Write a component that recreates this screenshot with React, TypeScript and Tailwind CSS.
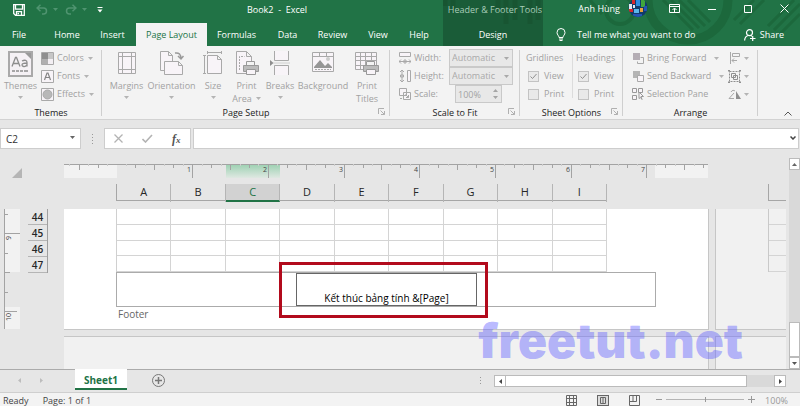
import React from "react";

const INK = "#a9a9a9";

function Caret({ className = "text-[#b4b4b4]" }: { className?: string }) {
  return (
    <svg width="5" height="3" viewBox="0 0 5 3" className={`shrink-0 ${className}`} aria-hidden="true">
      <path d="M0 0h5L2.500 3z" fill="currentColor" />
    </svg>
  );
}

function Launcher({ name }: { name: string }) {
  return (
    <button type="button" aria-label={name} className="absolute right-1 bottom-1 h-2 w-2">
      <svg width="7" height="7" viewBox="0 0 7 7" fill="none" stroke="#b0b0b0">
        <path d="M.5 6V.5H6M2.500 2.500l4 4M6.500 3v3.500H3" />
      </svg>
    </button>
  );
}

/* ---------- Header ---------- */

function TitleLeft() {
  return (
    <div className="flex h-[23px] items-center pb-1 pl-[13px]">
      <button type="button" aria-label="Save">
        <svg width="12" height="12" viewBox="0 0 12 12" fill="none" stroke="#fff" strokeWidth="1.300">
          <path d="M.7.7h10.600v10.600H2.500L.7 9.500zM2.500.7v4.500h7V.7M3.500 11V7.700h5V11" />
          <path d="M4.500 9.500h1.500" />
        </svg>
      </button>
      <button type="button" aria-label="Undo" className="ml-[11px] flex items-center gap-[5px]">
        <svg width="12" height="11" viewBox="0 0 12 11" fill="none" stroke="#4f9470" strokeWidth="1.500">
          <path d="M4.500.7L1 4l3.500 3.300M1.300 4H7.500a3 3 0 0 1 0 6H6" />
        </svg>
        <Caret className="text-[#4f9470]" />
      </button>
      <button type="button" aria-label="Redo" className="ml-[7px] flex items-center gap-[5px]">
        <svg width="12" height="11" viewBox="0 0 12 11" fill="none" stroke="#4f9470" strokeWidth="1.500">
          <path d="M7.500.7L11 4 7.500 7.300M10.700 4H4.500a3 3 0 0 0 0 6H6" />
        </svg>
        <Caret className="text-[#4f9470]" />
      </button>
      <button type="button" aria-label="Customize Quick Access Toolbar" className="ml-[10px]">
        <svg width="6" height="6" viewBox="0 0 6 6" fill="#fff">
          <path d="M.5 0h5v1h-5zM.5 2.500h5L3 5.500z" />
        </svg>
      </button>
      <h1 className="flex-1 pl-[8px] text-center text-[9px] font-medium whitespace-nowrap">Book2&nbsp; -&nbsp; Excel</h1>
    </div>
  );
}

const tabs: [string, string][] = [
  ["File", "w-[45px] pr-[7px]"],
  ["Home", "w-[44px]"],
  ["Insert", "w-[47px]"],
  ["Page Layout", "w-[71px]"],
  ["Formulas", "w-[59px]"],
  ["Data", "w-[43px]"],
  ["Review", "w-[47px]"],
  ["View", "w-[44px]"],
  ["Help", "w-[38px]"],
];

function HeaderArt() {
  return (
    <svg
      className="pointer-events-none absolute top-0 right-0"
      width="357"
      height="46"
      viewBox="443 0 357 46"
      fill="none"
      stroke="#1c683c"
      aria-hidden="true"
    >
      <circle cx="688" cy="0" r="40" strokeWidth="9" />
      <circle cx="620" cy="10" r="14" strokeWidth="4" />
      <path strokeWidth="3" d="M663 0l30 30M671 0l28 28M679 0l26 26M688 0l22 22M590 0l12 14M734 20l20-20M740 24l24-24M768 26l26-26M774 30l26-26M780 34l20-20" />
      <path stroke="#185532" strokeWidth="5" d="M445 0v6M453 0v12M498 0v10M506 0v24M515 0v20M530 0v24M538 0v20" />
    </svg>
  );
}

function Header() {
  return (
    <header className="relative flex h-[46px] shrink-0 bg-[#217346] text-[9px] font-medium text-white">
      <div className="flex w-[443px] shrink-0 flex-col">
        <TitleLeft />
        <nav className="flex h-[23px]">
          {tabs.map(([t, w]) => (
            <button
              key={t}
              type="button"
              className={`${w} ${t === "Page Layout" ? "bg-[#f3f3f3] text-[#217346]" : ""} whitespace-nowrap`}
            >
              {t}
            </button>
          ))}
        </nav>
      </div>
      <div className="w-[100px] shrink-0 bg-[#1a5c38]" />
      <div className="flex-1" />
      <HeaderArt />
      <div className="absolute inset-y-0 right-0 left-[443px] flex">
        <div className="flex w-[100px] flex-col text-center">
          <span className="h-[23px] pt-[1px] pl-1 leading-[17px] font-normal whitespace-nowrap text-[#a9cdb8]">Header &amp; Footer Tools</span>
          <button type="button" className="h-[23px]">Design</button>
        </div>
        <div className="flex min-w-0 flex-1 flex-col">
          <div className="flex h-[23px] items-start">
            <span className="ml-auto pr-2 leading-[17px]">Anh Hùng</span>
            <svg width="20" height="18" viewBox="0 0 20 18" aria-label="Account picture">
              <clipPath id="face"><circle cx="10" cy="7.500" r="9.500" /></clipPath>
              <g clipPath="url(#face)">
                <path fill="#123a6b" d="M0-3h20v21H0z" />
                <path fill="#d8262c" d="M4 0h3v4H4z" />
                <path fill="#2f8be0" d="M8 0h4v6H8z" />
                <path fill="#3fa63c" d="M13 0h4v7h-4z" />
                <path fill="#e2e8f5" d="M1 4h3v5H1zM5 5h2v3H5z" />
                <path fill="#d8262c" d="M1 9h4v3H1z" />
                <path fill="#58b7ea" d="M6 9h5v4H6z" />
                <path fill="#e8a33a" d="M12 8h3v4h-3z" />
                <path fill="#2454b4" d="M16 6h3v5h-3zM5 14h9v3H5z" />
              </g>
            </svg>
            <div className="flex h-[17px] items-center pl-[21px]">
              <button type="button" aria-label="Ribbon Display Options" className="w-[11px]">
                <svg width="11" height="9" viewBox="0 0 11 9" fill="none" stroke="#fff">
                  <path d="M.5.5h10v8H.5zM.5 2.500h10M5.500 8V4.500M3.500 6l2-2 2 2" />
                </svg>
              </button>
              <button type="button" aria-label="Minimize" className="ml-7">
                <svg width="8" height="8" stroke="#fff"><path d="M0 4.500h8" /></svg>
              </button>
              <button type="button" aria-label="Maximize" className="ml-7">
                <svg width="8" height="8" fill="none" stroke="#fff"><path d="M.5.5h7v7h-7z" /></svg>
              </button>
              <button type="button" aria-label="Close" className="mr-[11px] ml-7">
                <svg width="9" height="9" stroke="#fff"><path d="M.5.5l8 8M8.500.5l-8 8" /></svg>
              </button>
            </div>
          </div>
          <div className="flex h-[23px] items-center pr-4 pl-[13px]">
            <button type="button" className="flex items-center gap-[11px] whitespace-nowrap">
              <svg width="10" height="13" viewBox="0 0 10 13" fill="none" stroke="#fff">
                <path d="M3 9.500C3 7.500 1 7 1 4.500a4 4 0 0 1 8 0C9 7 7 7.500 7 9.500zM3 11h4M3.500 12.500h3" />
              </svg>
              Tell me what you want to do
            </button>
            <button type="button" className="ml-auto flex items-center gap-1">
              <svg width="12" height="12" viewBox="0 0 12 12" fill="none" stroke="#fff" strokeWidth="1.200">
                <circle cx="5.500" cy="3.700" r="3" />
                <path d="M.6 11.500c.2-3 1.500-4.500 3.600-5M6.800 6.500l1.200.8M6 9.500h5.500M8.700 7v5" />
              </svg>
              Share
            </button>
          </div>
        </div>
      </div>
    </header>
  );
}

/* ---------- Ribbon ---------- */

function Group({ title, className, launcher, children }: { title: string; className: string; launcher?: boolean; children: React.ReactNode }) {
  return (
    <section className={`relative flex shrink-0 flex-col ${className}`}>
      <div className="flex h-[61px]">{children}</div>
      <h2 className="text-center leading-[13px] font-medium text-[#222]">{title}</h2>
      {launcher && <Launcher name={`${title} settings`} />}
      <span className="absolute top-1 right-0 h-[66px] w-px bg-[#cfcfcf]" />
    </section>
  );
}

function Big({ label, icon, caret, className }: { label: string; icon: React.ReactNode; caret?: "below" | "inline"; className: string }) {
  const [first, second] = label.split("|");
  return (
    <button type="button" className={`flex shrink-0 flex-col items-center pt-[5px] leading-[13px] whitespace-nowrap ${className}`}>
      <span className="flex h-7 items-start">{icon}</span>
      <span>{first}</span>
      {second && (
        <span className="flex items-center gap-1">
          {second}
          {caret === "inline" && <Caret />}
        </span>
      )}
      {caret === "below" && <Caret className="mt-1 text-[#b4b4b4]" />}
    </button>
  );
}

const paper = { fill: "#f8f4f8", stroke: INK };

const ThemesIcon = (
  <svg width="25" height="26" viewBox="0 0 25 26">
    <path d="M1 1h23v24H1z" fill="#f5f1f5" stroke={INK} strokeWidth="2" />
    <path d="M17 2h6v6z" fill="#9a9a9a" />
    <path d="M4 15.500L7.500 6.500h1L12 15.500M5.500 12.500h5" fill="none" stroke="#8d8d8d" strokeWidth="1.300" />
    <path d="M14 10c3-1.500 5-.5 5 1.500v4M19 12c-3 0-5 .5-5 2s3 2.500 5 0" fill="none" stroke="#8d8d8d" strokeWidth="1.300" />
    <path d="M4 20h3M8 20h3M12 20h3M16 20h4" stroke="#8d8d8d" strokeWidth="1.500" />
  </svg>
);
const MarginsIcon = (
  <svg width="20" height="24" viewBox="0 0 20 24" {...paper}>
    <path d="M1.500 1.500h17v21h-17zM5.500 1v22M14.500 1v22M1 5.500h18M1 18.500h18" />
  </svg>
);
const OrientationIcon = (
  <svg width="25" height="25" viewBox="0 0 25 25" {...paper}>
    <path d="M1.500.5h8l4 4v15h-12zM9.500.5v4h4" />
    <path d="M5.500 10.500h14l4 4v9h-18zM19.500 10.500v4h4" />
    <path d="M16 2c4-.5 6 1 6 6M19 5l3 3 2.500-3" fill="none" strokeWidth="1.500" stroke="#999" />
  </svg>
);
const SizeIcon = (
  <svg width="20" height="24" viewBox="0 0 20 24" {...paper}>
    <path d="M4.500 4.500h10l4 4v14h-14zM14.500 4.500v4h4" />
    <path d="M4 1.500h15M4.500 0v3M18.500 0v3M1.500 4v19M0 4.500h3M0 22.500h3" />
  </svg>
);
const Printer = (
  <g>
    <path d="M11.500 10.500h8v5h-8z" fill="#f3f3f3" stroke="#999" />
    <path d="M8.500 14.500h15v6h-15z" fill="#bbb" stroke="#999" />
    <path d="M11.500 18.500h9v5h-9z" fill="#f8f4f8" stroke="#999" />
  </g>
);
const PrintAreaIcon = (
  <svg width="24" height="24" viewBox="0 0 24 24" {...paper}>
    <path d="M1.500.5h10l5 5v17h-15zM11.500.5v5h5" />
    <path d="M4.500 19V5.500h5" strokeDasharray="2 1" />
    {Printer}
  </svg>
);
const BreaksIcon = (
  <svg width="20" height="24" viewBox="0 0 20 24" {...paper}>
    <path d="M4.500 0v9.500h14V0M4.500 24v-9.500h14V24" />
    <path d="M0 9l3.500 3L0 15z" fill="#8d8d8d" stroke="none" />
    <path d="M3 12h17" stroke="#d0d0d0" />
  </svg>
);
const BackgroundIcon = (
  <svg width="22" height="22" viewBox="0 0 22 22" {...paper}>
    <path d="M.5 1.500h21v19H.5zM.5 5.500h21M7.500 1v5M14.500 1v5" />
    <circle cx="16" cy="8" r="2" fill="#ccc" stroke="none" />
    <path d="M2 16l6-7 5 6 3-3 4 4v1H2z" fill="#969696" stroke="none" />
    <path d="M3 18.500h16" strokeDasharray="2 1" />
  </svg>
);
const PrintTitlesIcon = (
  <svg width="24" height="24" viewBox="0 0 24 24" {...paper}>
    <path d="M.5 1.500h21v17H.5zM.5 5.500h21M.5 9.500h21M.5 14.500h21M5.500 1v18M10.500 1v18M16.500 1v18" />
    {Printer}
  </svg>
);

function Small({ icon, label, name, caret, gap = "gap-1" }: { icon: React.ReactNode; label?: string; name?: string; caret?: boolean; gap?: string }) {
  return (
    <button type="button" aria-label={label ?? name} className={`flex h-[18px] items-center whitespace-nowrap ${gap}`}>
      <span className="flex items-center gap-[3px]">
        {icon}
        {label}
      </span>
      {caret && <Caret />}
    </button>
  );
}

function Tick({ label, checked }: { label: string; checked?: boolean }) {
  return (
    <label className="flex h-[18px] items-center gap-[5px]">
      <span className="relative h-[11px] w-[11px]">
        <input
          type="checkbox"
          defaultChecked={checked}
          className="peer block h-[11px] w-[11px] appearance-none border border-[#c3c3c3] bg-[#e9e9e9]"
        />
        <svg className="pointer-events-none absolute inset-0 hidden peer-checked:block" width="11" height="11" fill="none" stroke="#8f8f8f">
          <path d="M2.500 5.500l2 2 4-4.500" />
        </svg>
      </span>
      {label}
    </label>
  );
}

function FitSelect({ id }: { id: string }) {
  return (
    <span className="relative ml-auto">
      <select id={id} className="block h-[18px] w-16 appearance-none border border-[#c9c9c9] bg-[#e8e8e8] pl-[2px] text-[9px] text-[#a9a9a9]">
        <option>Automatic</option>
      </select>
      <Caret className="pointer-events-none absolute top-2 right-1 text-[#a9a9a9]" />
    </span>
  );
}

function Ribbon() {
  return (
    <div className="relative flex h-[74px] shrink-0 border-b border-[#d2d2d2] bg-[#f3f3f3] text-[9px] text-[#a2a2a2]">
      <Group title="Themes" className="w-[102px]">
        <Big label="Themes" icon={ThemesIcon} caret="below" className="w-[41px]" />
        <div className="pt-[3px]">
          <Small
            label="Colors"
            caret
            icon={
              <svg width="13" height="13" viewBox="0 0 13 13">
                <path d="M.5.5h12v12H.5z" fill="#f3eff3" stroke={INK} />
                <path d="M1 1h6v6H1z" fill="#8f8f8f" /><path d="M7 1h5v6H7z" fill="#c6c6c6" /><path d="M1 7h6v5H1z" fill="#b0b0b0" />
              </svg>
            }
          />
          <Small
            label="Fonts"
            caret
            icon={
              <svg width="13" height="13" viewBox="0 0 13 13" fill="#f8f4f8" stroke={INK}>
                <path d="M.5.5h12v12H.5z" />
                <path d="M3.500 10l2.500-7h1l2.500 7M4.500 7.500h4" fill="none" stroke="#858585" strokeWidth="1.200" />
              </svg>
            }
          />
          <Small
            label="Effects"
            caret
            icon={
              <svg width="13" height="13" viewBox="0 0 13 13" fill="#f8f4f8" stroke={INK}>
                <path d="M.5.5h12v12H.5z" />
                <circle cx="6.500" cy="6.500" r="4.500" fill="#b8b8b8" />
              </svg>
            }
          />
        </div>
      </Group>

      <Group title="Page Setup" className="w-[288px]" launcher>
        <Big label="Margins" icon={MarginsIcon} caret="below" className="ml-1 w-[41px]" />
        <Big label="Orientation" icon={OrientationIcon} caret="below" className="w-[49px]" />
        <Big label="Size" icon={SizeIcon} caret="below" className="w-[34px]" />
        <Big label="Print|Area" icon={PrintAreaIcon} caret="inline" className="w-[33px]" />
        <Big label="Breaks" icon={BreaksIcon} caret="below" className="w-[34px]" />
        <Big label="Background" icon={BackgroundIcon} className="w-[52px]" />
        <Big label="Print|Titles" icon={PrintTitlesIcon} className="w-[36px]" />
      </Group>

      <Group title="Scale to Fit" className="w-[130px]" launcher>
        <div className="flex w-full flex-col pt-[3px] pr-[7px] pl-[9px]">
          <div className="flex items-center gap-[3px]">
            <svg width="12" height="12" viewBox="0 0 12 12" fill="#f8f4f8" stroke={INK}>
              <path d="M.5.5h11v4H.5z" /><path d="M0 9.500h12M2 7.500l-2 2 2 2M10 7.500l2 2-2 2M5 8h2v3H5z" />
            </svg>
            <label htmlFor="fit-width">Width:</label>
            <FitSelect id="fit-width" />
          </div>
          <div className="flex items-center gap-[3px]">
            <svg width="12" height="12" viewBox="0 0 12 12" fill="#f8f4f8" stroke={INK}>
              <path d="M8.500.5h3v11h-3z" /><path d="M3 0v12M1 2l2-2 2 2M1 10l2 2 2-2M1.500 5h3v2h-3z" />
            </svg>
            <label htmlFor="fit-height">Height:</label>
            <FitSelect id="fit-height" />
          </div>
          <div className="flex h-[18px] items-center gap-[3px]">
            <svg width="12" height="12" viewBox="0 0 12 12" fill="#f8f4f8" stroke={INK}>
              <path d="M.5.5h7v7h-7zM4.500 4.500h7v7h-7zM1 10.500h2M6.500 6.500l3 3M9.500 7v2.500H7" />
            </svg>
            <label htmlFor="fit-scale">Scale:</label>
            <span className="relative mr-[11px] ml-auto">
              <input id="fit-scale" defaultValue="100%" className="block h-[18px] w-[47px] border border-[#c9c9c9] bg-[#e8e8e8] pl-[2px]" />
              <svg className="pointer-events-none absolute top-1 right-1" width="5" height="10" fill="#a5a5a5">
                <path d="M0 3h5L2.500 0zM0 7h5l-2.500 3z" />
              </svg>
            </span>
          </div>
        </div>
      </Group>

      <Group title="Sheet Options" className="w-[103px]" launcher>
        <div className="w-[52px] pt-[3px] pl-[6px]">
          <div className="leading-[18px]">Gridlines</div>
          <div className="pl-[2px]">
            <Tick label="View" checked />
            <Tick label="Print" />
          </div>
        </div>
        <div className="my-2 w-px bg-[#dcdcdc]" />
        <div className="pt-[3px] pl-[3px]">
          <div className="leading-[18px]">Headings</div>
          <div className="pl-[2px]">
            <Tick label="View" checked />
            <Tick label="Print" />
          </div>
        </div>
      </Group>

      <Group title="Arrange" className="w-[135px]">
        <div className="w-[105px] pt-[3px] pl-[9px]">
          <Small
            label="Bring Forward"
            caret
            gap="gap-2"
            icon={
              <svg width="12" height="12" viewBox="0 0 12 12">
                <path d="M1 1h7v7H1z" fill="#b5aeb5" /><path d="M8.500 5.500h3v6h-6v-2" fill="none" stroke={INK} />
              </svg>
            }
          />
          <Small
            label="Send Backward"
            caret
            gap="gap-2"
            icon={
              <svg width="12" height="12" viewBox="0 0 12 12">
                <path d="M1 1h7v7H1z" fill="#b5b5b5" /><path d="M5.500 5.500h6v6h-6z" fill="#f8f4f8" stroke={INK} />
              </svg>
            }
          />
          <Small
            label="Selection Pane"
            icon={
              <svg width="12" height="12" viewBox="0 0 12 12" fill="#f8f4f8" stroke="#999">
                <path d="M.5.5h4v4h-4zM6.500.5h4v4h-4zM.5 7.500h4v4h-4zM7 4l4.500 4.500H9l1 3-1.500-2L7 10.500z" />
              </svg>
            }
          />
        </div>
        <div className="pt-[3px]">
          <Small
            name="Align"
            caret
            gap="gap-[3px]"
            icon={
              <svg width="13" height="12" viewBox="0 0 13 12" fill="none" stroke={INK}>
                <path d="M2.500 0v12M4.500 1.500h7v3h-7zM4 8.500h5M6 6.500l-2 2 2 2" />
              </svg>
            }
          />
          <Small
            name="Group"
            caret
            gap="gap-[3px]"
            icon={
              <svg width="13" height="13" viewBox="0 0 13 13" fill="none" stroke="#8f8f8f">
                <path d="M1.500 1.500h10v10h-10z" strokeDasharray="2 1" /><path d="M3.500 3.500h4v4h-4zM5.500 5.500h4v4h-4z" />
                <path d="M0 .5h2M11 .5h2M0 12.500h2M11 12.500h2" strokeWidth="2" />
              </svg>
            }
          />
          <Small
            name="Rotate"
            caret
            gap="gap-[3px]"
            icon={
              <svg width="13" height="11" viewBox="0 0 13 11" fill="none" stroke={INK}>
                <path d="M6 9.500H1L6 4M3 3c1-2 3-2 4-1" /><path d="M8 2v8h5z" fill="#8f8f8f" stroke="none" />
              </svg>
            }
          />
        </div>
      </Group>
      <button type="button" aria-label="Collapse the Ribbon" className="mt-auto mr-2 mb-[3px] ml-auto">
        <svg width="8" height="5" fill="none" stroke="#555"><path d="M.5 4.500L4 1l3.500 3.500" /></svg>
      </button>
    </div>
  );
}

/* ---------- Formula bar ---------- */

function FormulaBar() {
  return (
    <div className="flex h-[29px] shrink-0 items-end pr-px text-[10px] text-[#333]">
      <span className="relative">
        <input aria-label="Name Box" defaultValue="C2" className="block h-[21px] w-[81px] border border-[#cdcdcd] bg-white pl-[5px]" />
        <Caret className="pointer-events-none absolute top-2 right-[6px] text-[#666]" />
      </span>
      <svg className="mx-[10px] mb-[5px]" width="3" height="10" fill="#999">
        <path d="M1 0h1v1H1zM1 3h1v1H1zM1 6h1v1H1zM1 9h1v1H1z" />
      </svg>
      <div className="flex h-[21px] w-[87px] items-center justify-around border border-[#cdcdcd] bg-white">
        <button type="button" aria-label="Cancel">
          <svg width="9" height="9" stroke="#b3b3b3" strokeWidth="1.300"><path d="M.5.5l8 8M8.500.5l-8 8" /></svg>
        </button>
        <button type="button" aria-label="Enter">
          <svg width="11" height="9" fill="none" stroke="#b3b3b3" strokeWidth="1.600"><path d="M.5 5l3 3L10 1" /></svg>
        </button>
        <button type="button" aria-label="Insert Function" className="flex items-baseline font-['Liberation_Serif',serif] text-[12px] leading-none font-bold text-[#555] italic">
          f<span className="text-[9px]">x</span>
        </button>
      </div>
      <span className="relative ml-[2px] flex-1">
        <input aria-label="Formula" className="block h-[21px] w-full border border-[#cdcdcd] bg-white px-1" />
        <svg className="pointer-events-none absolute top-2 right-[3px]" width="6" height="4" fill="none" stroke="#444" strokeWidth="1.500">
          <path d="M.5.5L3 3 5.500.5" />
        </svg>
      </span>
    </div>
  );
}

/* ---------- Worksheet ---------- */

const ORIGIN = 53;
const INCH = 75.7;

function HorizontalRuler() {
  const ticks = [];
  for (let i = -5; i <= 62; i++) {
    const x = Math.floor(ORIGIN + (i * INCH) / 8) + 0.5;
    const h = i % 8 === 0 ? (i > 0 ? 14 : 0) : i % 4 === 0 ? 6 : i % 2 === 0 ? 4 : 2;
    ticks.push(<path key={i} d={`M${x} 0v${h}`} stroke={h === 2 ? "#ccc" : "#a3a3a3"} />);
  }
  return (
    <svg width="644" height="14" viewBox="0 0 644 14" className="shrink-0">
      <defs>
        <linearGradient id="active" x1="0" y1="0" x2="0" y2="1">
          <stop offset="0" stopColor="#9bd0b0" />
          <stop offset="1" stopColor="#dfe8e2" />
        </linearGradient>
      </defs>
      <path d="M0 0h53v14H0zM591 0h53v14H591z" fill="#f2f2f2" />
      <path d="M162 0h54v14h-54z" fill="url(#active)" />
      <path d="M0 .5h644" stroke="#a3a3a3" />
      {ticks}
      {[1, 2, 3, 4, 5, 6, 7].map((n) => (
        <text key={n} x={Math.floor(ORIGIN + n * INCH) - 1} y="8" textAnchor="end" fontSize="7" fill="#444">
          {n}
        </text>
      ))}
    </svg>
  );
}

function VerticalRuler() {
  return (
    <svg width="16" height="120" viewBox="0 0 16 120" className="ml-1 shrink-0">
      <path d="M0 0h16v63H0zM0 98h16v22H0z" fill="#f2f2f2" />
      <path d="M.5 0v120M0 24.500h16M0 102.500h13M0 63.500h6M0 5.500h4M0 44.500h4M0 83.500h4" stroke="#a3a3a3" />
      <text transform="translate(7 31) rotate(-90)" fontSize="7" fill="#444">9</text>
      <text transform="translate(7 112) rotate(-90)" fontSize="7" fill="#444">10</text>
    </svg>
  );
}

const columns = ["A", "B", "C", "D", "E", "F", "G", "H", "I"];
const rows = [44, 45, 46, 47];

function Worksheet() {
  return (
    <div className="flex min-w-0 flex-1 flex-col overflow-hidden pr-[3px]">
      <div className="flex pt-[15px]">
        <div className="w-16 shrink-0 pt-1 pl-3">
          <svg width="10" height="10" fill="#b5b5b5"><path d="M10 0v10H0z" /></svg>
        </div>
        <HorizontalRuler />
      </div>
      <div className="mt-[6px] mb-2 flex h-[17px] text-[11px] text-[#262626]">
        <div className="ml-[116px] grid w-[491px] shrink-0 grid-cols-9 border-b border-l border-[#a6a6a6]">
          {columns.map((c) => (
            <div
              key={c}
              className={`border-r border-[#b5b5b5] text-center leading-4 ${c === "C" ? "border-b-2 border-b-[#217346] bg-[#d2d2d2] text-[#217346]" : ""}`}
            >
              {c}
            </div>
          ))}
        </div>
        <div className="ml-[161px] flex-1 border-b border-l border-[#a6a6a6]" />
      </div>
      <div className="flex h-[121px] shrink-0">
        <div className="flex w-16 shrink-0">
          <VerticalRuler />
          <div className="ml-2 h-16 w-5 border-r border-[#9f9f9f] text-center text-[10px] font-semibold text-[#262626]">
            {rows.map((n) => (
              <div key={n} className="h-4 border-b border-[#b5b5b5] leading-4">{n}</div>
            ))}
          </div>
        </div>
        <div className="w-[645px] shrink-0 border-r border-b border-[#c6c6c6] bg-white pl-[52px]">
          <div className="grid h-[63px] w-[491px] grid-cols-9 grid-rows-4 border-l border-[#d0d0d0]">
            {rows.flatMap((n) => columns.map((c) => <div key={c + n} className="border-r border-b border-[#d4d4d4]" />))}
          </div>
          <div className="flex h-[35px] w-[540px] border border-[#ababab] pl-[179px]">
            <div className="relative w-[181px]">
              <input
                aria-label="Center footer section"
                defaultValue="Kết thúc bảng tính &[Page]"
                className="block h-[33px] w-full border border-[#666] bg-white pt-4 text-center text-[10px] leading-4 text-black"
              />
              <div className="pointer-events-none absolute -top-[11px] -right-[11px] -bottom-[12px] -left-[17px] border-3 border-[#b20a1c]" />
            </div>
          </div>
          <div className="pl-[2px] text-[10px] leading-[14px] text-[#666]">Footer</div>
        </div>
        <div className="ml-[6px] flex-1 border-b border-l border-[#c6c6c6] bg-[#f1f1f1] pl-[52px]">
          <div className="grid h-[63px] grid-rows-4 border-l border-[#c9c9c9]">
            {rows.map((n) => (
              <div key={n} className="border-b border-[#d4d4d4]" />
            ))}
          </div>
        </div>
      </div>
      <div className="mt-[6px] flex flex-1 pl-16">
        <div className="w-[645px] shrink-0 border-t border-r border-[#c6c6c6] bg-[#f1f1f1]" />
        <div className="ml-[6px] flex-1 border-t border-l border-[#c6c6c6] bg-[#f1f1f1]" />
      </div>
    </div>
  );
}

function VerticalScroll() {
  return (
    <div className="mt-[9px] flex w-[11px] shrink-0 flex-col bg-[#d9d9d9]">
      <button type="button" aria-label="Scroll up" className="flex h-3 items-center justify-center border border-[#bbb] bg-white">
        <svg width="5" height="3" fill="#666"><path d="M0 3h5L2.500 0z" /></svg>
      </button>
      <div className="flex-1" />
      <div className="h-[35px] border border-[#bbb] bg-white" />
      <button type="button" aria-label="Scroll down" className="flex h-3 items-center justify-center border border-[#bbb] bg-white">
        <Caret className="text-[#555]" />
      </button>
    </div>
  );
}

/* ---------- Bottom ---------- */

function SheetTabs() {
  return (
    <div className="flex h-[23px] shrink-0 items-start border-t border-[#ababab]">
      <div className="flex h-5 w-[75px] items-center gap-[19px] pl-[18px]">
        <button type="button" aria-label="Previous sheets"><svg width="3" height="5" fill="#bdbdbd"><path d="M3 0v5L0 2.500z" /></svg></button>
        <button type="button" aria-label="Next sheets"><svg width="3" height="5" fill="#bdbdbd"><path d="M0 0v5l3-2.500z" /></svg></button>
      </div>
      <button type="button" className="-mt-px h-[21px] w-[52px] border-b-2 border-[#217346] bg-white pt-[2px] text-[10px] leading-4 font-bold text-[#217346]">
        Sheet1
      </button>
      <button type="button" aria-label="New sheet" className="mt-1 ml-[25px]">
        <svg width="13" height="13" fill="none" stroke="#777"><circle cx="6.500" cy="6.500" r="6" /><path d="M3 6.500h7M6.500 3v7" strokeWidth="1.500" /></svg>
      </button>
      <div className="mt-[5px] mr-[14px] ml-auto flex w-[306px] items-center">
        <svg width="2" height="9" fill="#999" className="mr-3 shrink-0"><path d="M0 0h1v1H0zM0 3h1v1H0zM0 6h1v1H0z" /></svg>
        <div className="flex h-3 flex-1 bg-[#d9d9d9]">
          <button type="button" aria-label="Scroll left" className="flex w-3 items-center justify-center border border-[#bbb] bg-white">
            <svg width="3" height="5" fill="#444"><path d="M3 0v5L0 2.500z" /></svg>
          </button>
          <div className="mr-[27px] flex-1 border border-l-0 border-[#bbb] bg-white" />
          <button type="button" aria-label="Scroll right" className="flex w-3 items-center justify-center border border-[#bbb] bg-white">
            <svg width="3" height="5" fill="#444"><path d="M0 0v5l3-2.500z" /></svg>
          </button>
        </div>
      </div>
    </div>
  );
}

function StatusBar() {
  return (
    <footer className="flex h-[14px] shrink-0 items-center border-t border-[#cfcfcf] bg-[#f3f3f3] pr-3 pl-[3px] text-[9px] leading-[13px] text-[#444]">
      <span className="pt-px">Ready</span>
      <span className="ml-[14px] pt-px">Page: 1 of 1</span>
      <div className="ml-auto flex items-center gap-5 pt-[2px]">
        <button type="button" aria-label="Normal">
          <svg width="11" height="11" fill="none" stroke="#666"><path d="M.5.5h10v10H.5zM.5 3.500h10M.5 7.500h10M3.500 0v11M7.500 0v11" /></svg>
        </button>
        <button type="button" aria-label="Page Layout view" className="bg-[#dcdcdc]">
          <svg width="12" height="11" fill="none" stroke="#666"><path d="M.5 0v11M11.500 0v11M.5.5h11M.5 10.500h11M3.500 2.500h5v6h-5zM6 2v7" /></svg>
        </button>
        <button type="button" aria-label="Page Break Preview">
          <svg width="11" height="11" fill="none" stroke="#666"><path d="M.5.5h10v10H.5zM.5 6.500h7V0M4 0v6" /></svg>
        </button>
      </div>
      <button type="button" aria-label="Zoom out" className="mr-1 ml-4">
        <svg width="6" height="7" stroke="#999"><path d="M0 3.500h6" /></svg>
      </button>
      <span className="flex w-[78px] items-center">
        <input
          type="range"
          aria-label="Zoom"
          defaultValue="50"
          className="h-[5px] w-full appearance-none bg-[linear-gradient(#b5b5b5,#b5b5b5)] bg-[length:100%_1px] bg-center bg-no-repeat [&::-webkit-slider-thumb]:h-[5px] [&::-webkit-slider-thumb]:w-px [&::-webkit-slider-thumb]:appearance-none [&::-webkit-slider-thumb]:bg-[#999]"
        />
      </span>
      <button type="button" aria-label="Zoom in" className="mr-[10px] ml-1">
        <svg width="7" height="7" stroke="#999"><path d="M0 3.500h7M3.500 0v7" /></svg>
      </button>
      <span className="pt-px text-[#999]">100%</span>
    </footer>
  );
}

export default function App() {
  return (
    <div className="relative flex h-screen flex-col overflow-hidden bg-[#e6e6e6] font-['Open_Sans','Noto_Sans',sans-serif]">
      <Header />
      <Ribbon />
      <FormulaBar />
      <main className="flex min-h-0 flex-1">
        <Worksheet />
        <VerticalScroll />
      </main>
      <SheetTabs />
      <StatusBar />
      <div className="pointer-events-none absolute right-[57px] bottom-[38px] font-['Inter',sans-serif] text-[48px] leading-[54px] font-black text-[#6464ff]/45">
        freetut.net
      </div>
    </div>
  );
}
